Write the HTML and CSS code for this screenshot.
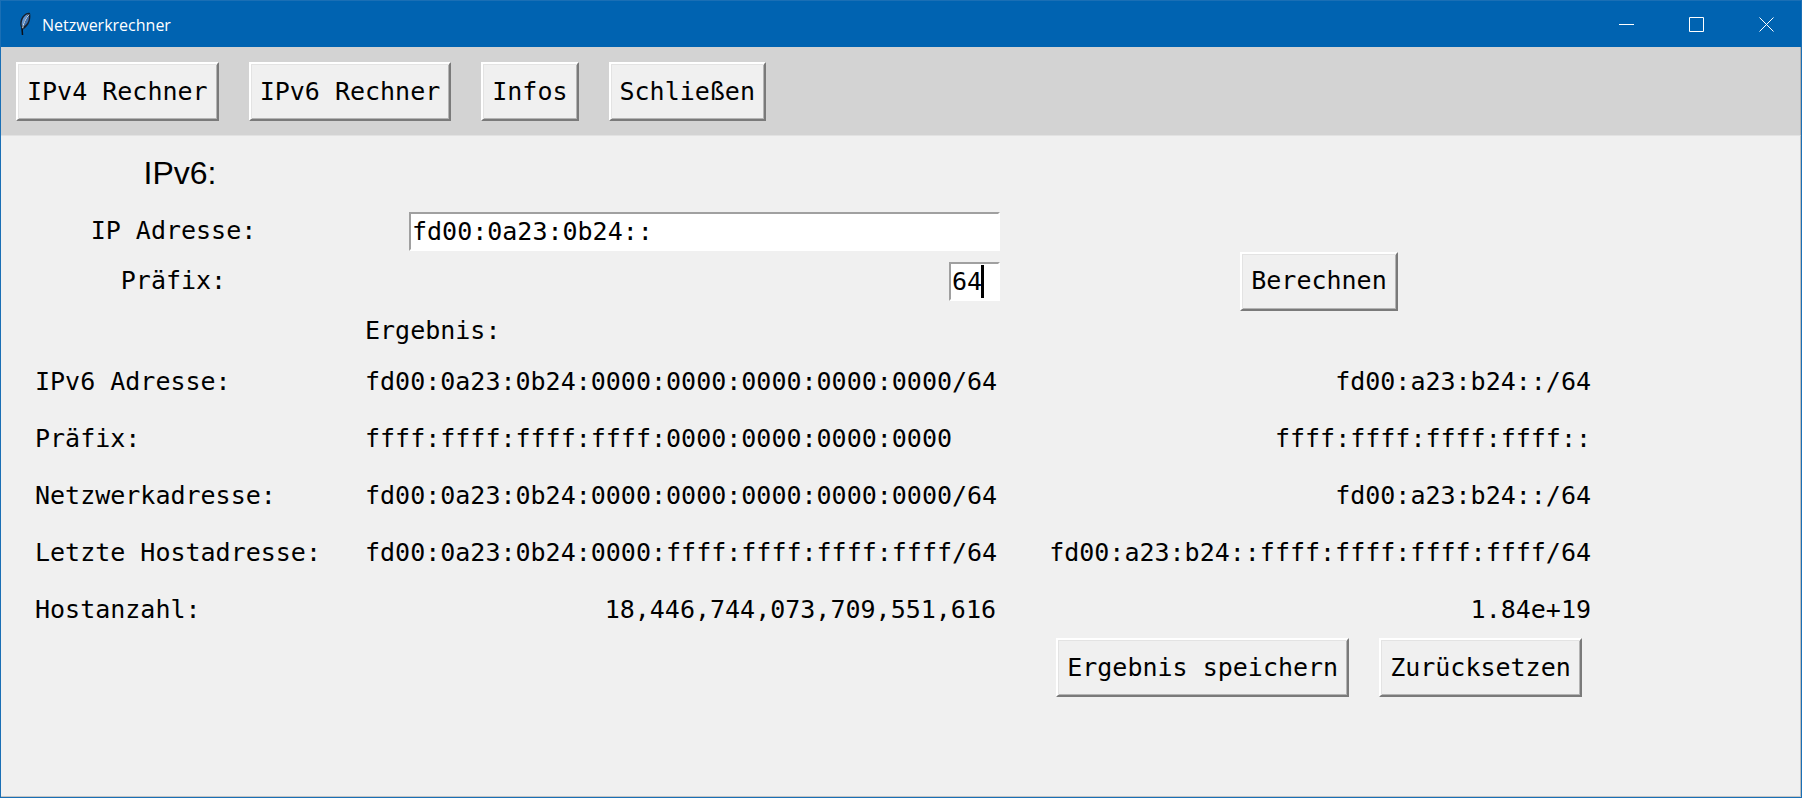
FILE: index.html
```html
<!DOCTYPE html>
<html lang="de">
<head>
<meta charset="utf-8">
<title>Netzwerkrechner</title>
<link rel="stylesheet" href="styles.css">
</head>
<body>
<div class="window">
  <header class="titlebar">
    <svg class="app-icon" width="14" height="24" viewBox="0 0 14 24" aria-hidden="true">
      <path d="M4.500 22.500 L4 17 C1 13 2 6 6 3 C8 1 10 .5 12 1 C13 5 12 11 9 14 C7.500 16 6 17 5 17.500 Z" fill="#15202e"/>
      <path d="M4 14.500 C3 10 5 5 8 3 L10 2 C9 5 6 9 4 14.500 Z" fill="#5f94d2"/>
      <path d="M5.500 14.500 C6 11 8.500 7 11 3.500 C11 8 10 12 5.500 14.500 Z" fill="#3c6fae"/>
      <path d="M4.500 17 C5 12 7.500 7 11 2.500" fill="none" stroke="#d5e6f7" stroke-width="1"/>
      <path d="M4 16 L4.500 23" stroke="#0a0f18" stroke-width="1.500"/>
    </svg>
    <span class="title">Netzwerkrechner</span>
    <div class="controls">
      <button class="control" type="button" aria-label="Minimieren"><svg width="15" height="15" viewBox="0 0 15 15"><path d="M0 7.500H15"/></svg></button>
      <button class="control" type="button" aria-label="Maximieren"><svg width="15" height="15" viewBox="0 0 15 15"><path d="M.5 .5H14.500V14.500H.5Z"/></svg></button>
      <button class="control" type="button" aria-label="Fenster schließen"><svg width="15" height="15" viewBox="0 0 15 15"><path d="M.5 .5L14.500 14.500M14.500 .5L.5 14.500"/></svg></button>
    </div>
  </header>

  <nav class="toolbar">
    <button class="btn" type="button">IPv4 Rechner</button>
    <button class="btn" type="button">IPv6 Rechner</button>
    <button class="btn" type="button">Infos</button>
    <button class="btn" type="button">Schließen</button>
  </nav>

  <main class="content">
    <form class="form">
      <h1 class="heading">IPv6:</h1>
      <label class="label" for="address">IP Adresse:&nbsp;</label>
      <input class="entry entry-address" id="address" type="text" value="fd00:0a23:0b24::">
      <label class="label" for="prefix">Präfix:&nbsp;</label>
      <span class="prefix"><input class="entry entry-prefix" id="prefix" type="text" value="64"><span class="caret"></span></span>
      <button class="btn calculate" type="button">Berechnen</button>
    </form>

    <table class="results">
      <caption class="caption">Ergebnis:</caption>
      <colgroup><col class="col-label"><col class="col-long"><col class="col-short"></colgroup>
      <tbody>
        <tr><th scope="row">IPv6 Adresse:</th><td>fd00:0a23:0b24:0000:0000:0000:0000:0000/64</td><td class="short">fd00:a23:b24::/64</td></tr>
        <tr><th scope="row">Präfix:</th><td>ffff:ffff:ffff:ffff:0000:0000:0000:0000</td><td class="short">ffff:ffff:ffff:ffff::</td></tr>
        <tr><th scope="row">Netzwerkadresse:</th><td>fd00:0a23:0b24:0000:0000:0000:0000:0000/64</td><td class="short">fd00:a23:b24::/64</td></tr>
        <tr><th scope="row">Letzte Hostadresse:</th><td>fd00:0a23:0b24:0000:ffff:ffff:ffff:ffff/64</td><td class="short">fd00:a23:b24::ffff:ffff:ffff:ffff/64</td></tr>
        <tr><th scope="row">Hostanzahl:</th><td class="number">18,446,744,073,709,551,616</td><td class="short">1.84e+19</td></tr>
      </tbody>
    </table>

    <div class="actions">
      <button class="btn" type="button">Ergebnis speichern</button>
      <button class="btn" type="button">Zurücksetzen</button>
    </div>
  </main>
</div>
</body>
</html>
```

FILE: styles.css
```css
:root {
  --label-col: 364px;
  --long-col: 635px;
  --short-col: 638px;
  --mono: "DejaVu Sans Mono", monospace;
}

* {
  box-sizing: border-box;
}

body {
  margin: 0;
  background: #f0f0f0;
  color: #000;
  font: 25px/30px var(--mono);
}

.window {
  display: flex;
  flex-direction: column;
  min-height: 100vh;
  border: 1px solid #1a6fb5;
}

.titlebar {
  display: flex;
  align-items: center;
  height: 46px;
  padding-left: 17px;
  background: #0063b1;
  color: #fff;
}

.title {
  flex: 1;
  margin-left: 10px;
  padding-top: 2px;
  font: 16px/24px "Open Sans", sans-serif;
}

.controls {
  display: flex;
  align-self: stretch;
}

.control {
  display: flex;
  align-items: center;
  justify-content: center;
  width: 70px;
  padding: 0;
  border: 0;
  background: transparent;
}

.control path {
  fill: none;
  stroke: #fff;
  stroke-width: 1;
}

.toolbar {
  display: flex;
  gap: 30px;
  padding: 15px 15px 14px;
  border-right: 1px solid #aeaeae;
  border-bottom: 1px solid #e2e2e2;
  background: #d3d3d3;
}

.btn {
  height: 59px;
  padding: 0 9px;
  border: 2px solid;
  border-color: #fff #7a7a7a #7a7a7a #fff;
  box-shadow: inset 1px 1px #e3e3e3, inset -1px -1px #b4b4b4;
  background: #f0f0f0;
  color: #000;
  font: 25px/30px var(--mono);
  white-space: nowrap;
}

.content {
  flex: 1;
  border-right: 1px solid #bdbdbd;
  border-bottom: 1px solid #c4c4c4;
}

.form {
  display: grid;
  grid-template-columns: var(--label-col) var(--long-col) var(--short-col);
  grid-template-rows: 70px 50px 50px;
  align-items: center;
}

.heading {
  grid-column: 1;
  margin: 0;
  padding: 3px 6px 0 0;
  font: 32px/36px "Liberation Sans", sans-serif;
  text-align: center;
}

.label {
  grid-column: 1;
  padding-right: 4px;
  text-align: center;
}

.entry {
  height: 39px;
  padding: 0 0 0 1px;
  border: 2px solid;
  border-color: #a0a0a0 #fff #fff #a0a0a0;
  border-radius: 0;
  outline: 0;
  background: #fff;
  color: #000;
  font: 25px/30px var(--mono);
}

.entry-address {
  justify-self: end;
  width: 591px;
}

.prefix {
  display: flex;
  position: relative;
  justify-self: end;
}

.entry-prefix {
  width: 51px;
}

.caret {
  position: absolute;
  top: 3px;
  left: 32px;
  width: 3px;
  height: 33px;
  background: #000;
}

.calculate {
  justify-self: center;
}

.results {
  width: 1637px;
  border-collapse: collapse;
  table-layout: fixed;
}

.caption {
  padding: 10px 0 7px var(--label-col);
  text-align: left;
}

.col-label {
  width: var(--label-col);
}

.col-long {
  width: var(--long-col);
}

.col-short {
  width: var(--short-col);
}

.results th,
.results td {
  height: 57px;
  padding: 0;
  font-weight: normal;
  text-align: left;
  white-space: nowrap;
}

.results th {
  padding-left: 34px;
}

.results .number {
  padding-right: 4px;
  text-align: right;
}

.results .short {
  padding-right: 47px;
  text-align: right;
}

.actions {
  display: flex;
  justify-content: center;
  gap: 30px;
  width: var(--short-col);
  margin-left: calc(var(--label-col) + var(--long-col));
}
```
